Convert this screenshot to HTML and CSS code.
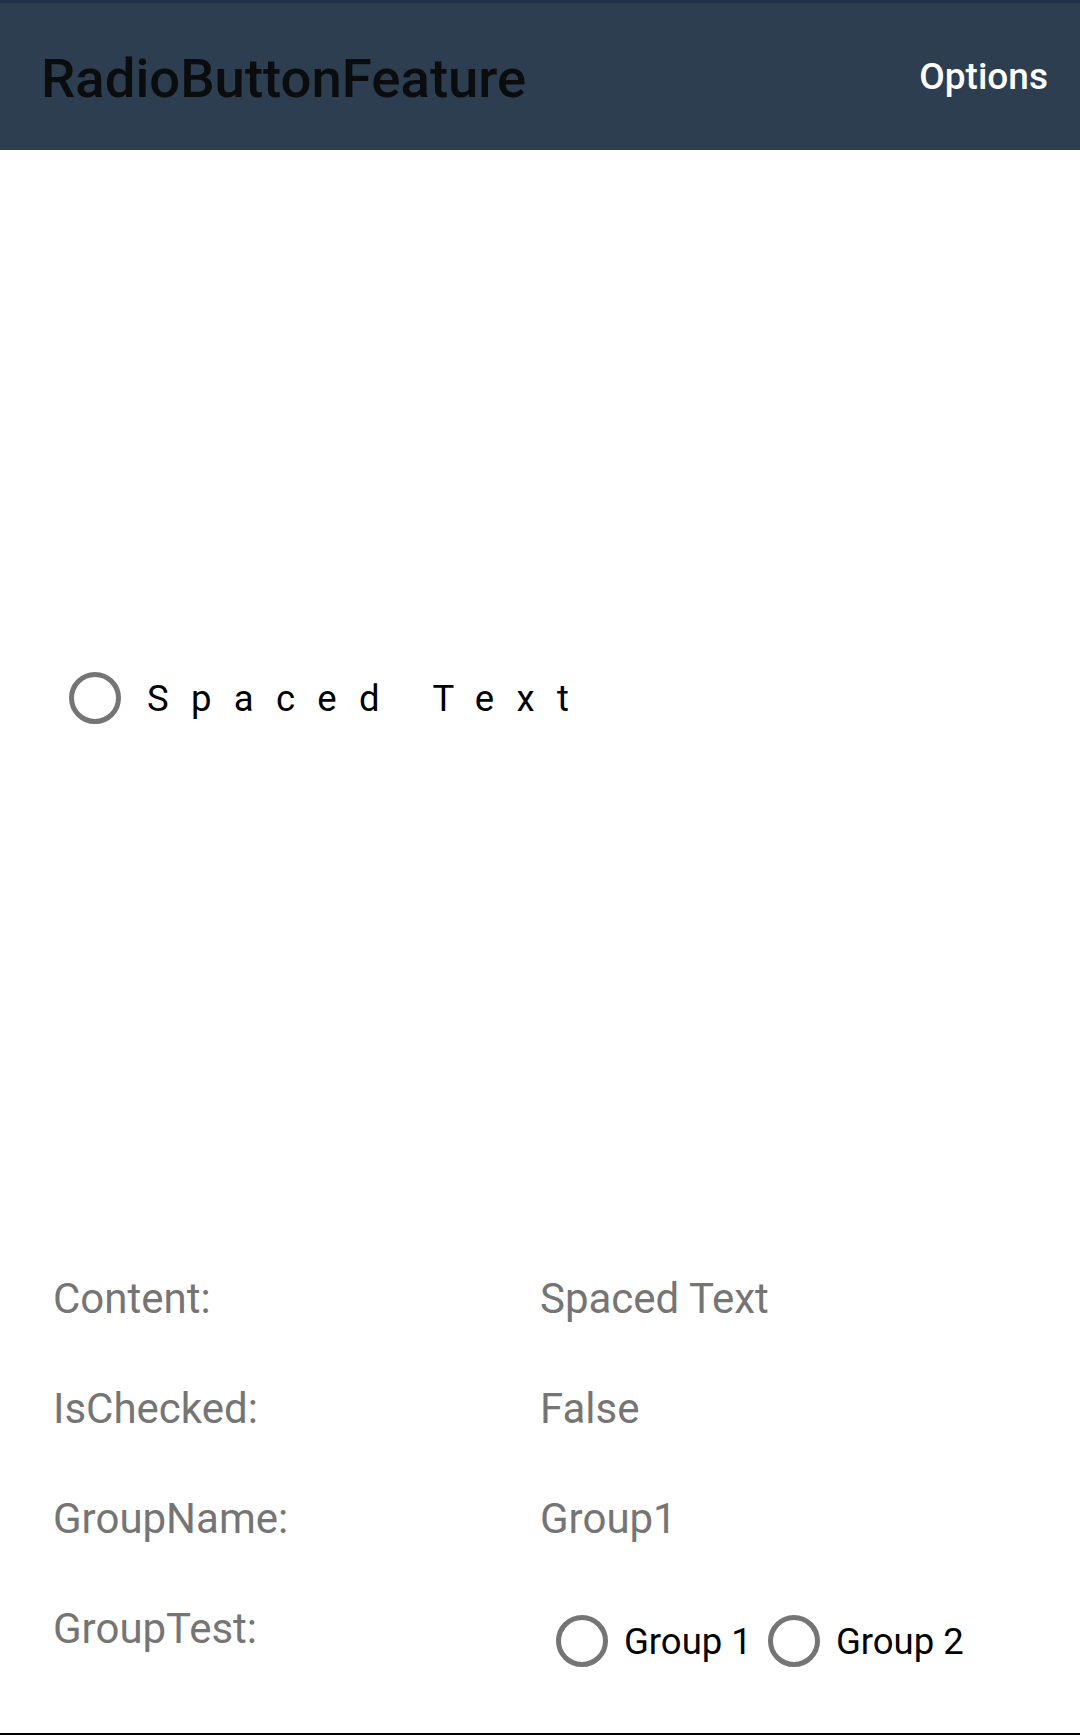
FILE: index.html
```html
<!DOCTYPE html>
<html lang="en">
<head>
<meta charset="utf-8">
<title>RadioButtonFeature</title>
<link rel="stylesheet" href="styles.css">
</head>
<body>
<div class="page">
  <header class="appbar">
    <h1 class="appbar-title">RadioButtonFeature</h1>
    <span class="appbar-action">Options</span>
  </header>

  <main class="content">
    <div class="spaced-row">
      <label class="radio radio-spaced">
        <span class="radio-circle"></span>
        <span class="radio-text spaced">Spaced Text</span>
      </label>
    </div>

    <div class="info">
      <div class="info-label">Content:</div>
      <div class="info-value">Spaced Text</div>

      <div class="info-label">IsChecked:</div>
      <div class="info-value">False</div>

      <div class="info-label">GroupName:</div>
      <div class="info-value">Group1</div>

      <div class="info-label">GroupTest:</div>
      <div class="info-value group-test">
        <label class="radio radio-small">
          <span class="radio-circle"></span>
          <span class="radio-text">Group 1</span>
        </label>
        <label class="radio radio-small">
          <span class="radio-circle"></span>
          <span class="radio-text">Group 2</span>
        </label>
      </div>
    </div>
  </main>

  <div class="bottom-line"></div>
</div>
</body>
</html>
```

FILE: styles.css
```css
* { box-sizing: border-box; }

html, body {
  margin: 0;
  padding: 0;
  background: #ffffff;
}

body {
  font-family: Roboto, "Noto Sans", "Liberation Sans", sans-serif;
}

.page {
  height: 1735px;
  display: flex;
  flex-direction: column;
}

.appbar {
  height: 150px;
  background: #2d3e50;
  border-top: 3px solid #1e3249;
  display: flex;
  align-items: center;
  justify-content: space-between;
  padding: 0 32px 0 41px;
  flex-shrink: 0;
}

.appbar-title {
  margin: 2px 0 0 0;
  font-size: 54.5px;
  font-weight: 500;
  color: #0b0c0e;
  line-height: 60px;
  letter-spacing: 0;
}

.appbar-action {
  font-size: 37px;
  font-weight: 500;
  color: #ffffff;
  line-height: 40px;
}

.content {
  flex: 1;
  display: flex;
  flex-direction: column;
}

.spaced-row {
  padding: 521px 0 0 69px;
  height: 1094px;
}

.radio {
  display: flex;
  align-items: center;
}

.radio-circle {
  width: 52px;
  height: 52px;
  border: 5px solid #757575;
  border-radius: 50%;
  flex-shrink: 0;
}

.radio-text {
  font-size: 36.5px;
  line-height: 52px;
  color: #000000;
}

.radio-spaced .radio-text {
  margin-left: 26px;
  padding-top: 2px;
}

.spaced {
  letter-spacing: 22.3px;
}

.info {
  display: grid;
  grid-template-columns: 487px 1fr;
  grid-auto-rows: 110px;
  padding-left: 53px;
}

.info-label,
.info-value {
  font-size: 42px;
  line-height: 110px;
  color: #757575;
}

.group-test {
  display: flex;
  align-items: flex-start;
  padding: 40px 0 0 16px;
  line-height: normal;
}

.radio-small .radio-text {
  margin-left: 16px;
  padding-top: 2px;
}

.radio-small + .radio-small {
  margin-left: 16px;
}

.bottom-line {
  height: 2px;
  background: #000000;
  flex-shrink: 0;
}
```
